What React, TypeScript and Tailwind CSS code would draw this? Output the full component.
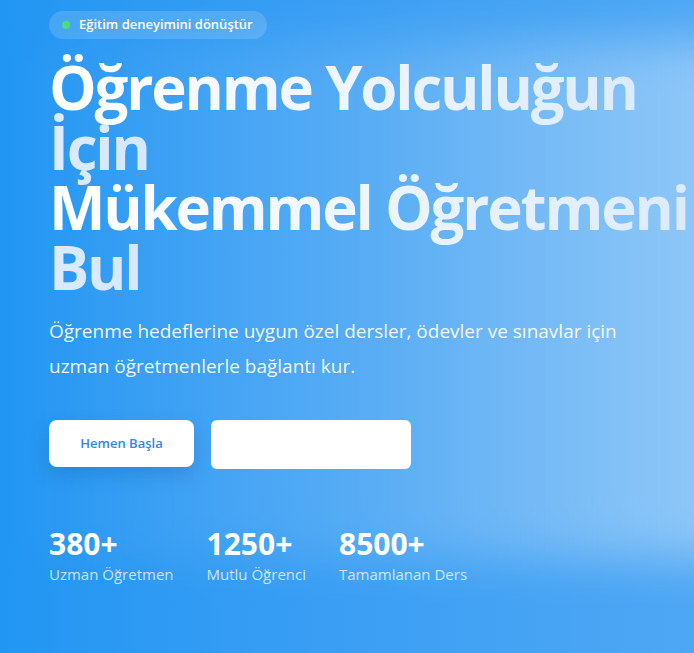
export default function App() {
  const stats = [
    { value: '380+', label: 'Uzman Öğretmen' },
    { value: '1250+', label: 'Mutlu Öğrenci' },
    { value: '8500+', label: 'Tamamlanan Ders' },
  ]

  return (
    <div
      className="relative h-[653px] w-full overflow-hidden bg-gradient-to-r from-[#2196f3] to-[#4ea7f4] text-white"
      style={{ fontFamily: '"Open Sans", "Noto Sans", sans-serif' }}
    >
      {/* light band on the right half */}
      <div className="pointer-events-none absolute -right-[60px] left-0 top-[40px] h-[520px] bg-gradient-to-r from-transparent via-white/15 to-white/40 blur-[24px]" />

      <div className="relative px-[49px] pt-[11px]">
        <div className="inline-flex h-[28px] items-center gap-[9px] rounded-full bg-white/15 pl-[13px] pr-[14px]">
          <span className="h-[8px] w-[8px] rounded-full bg-[#4ade80]" />
          <span className="text-[13px] font-semibold">Eğitim deneyimini dönüştür</span>
        </div>

        <h1 className="mt-[18px] w-[700px] text-[60px] font-bold leading-[60px] tracking-[-2.2px]">
          <span className="bg-gradient-to-r from-white to-[#d6e8fc] bg-clip-text text-transparent">
            Öğrenme Yolculuğun İçin
          </span>
          <br />
          <span className="bg-gradient-to-r from-white to-[#d6e8fc] bg-clip-text text-transparent">
            Mükemmel Öğretmeni Bul
          </span>
        </h1>

        <p className="mt-[17px] max-w-[590px] text-[19px] leading-[35px] text-white/95">
          Öğrenme hedeflerine uygun özel dersler, ödevler ve sınavlar için uzman öğretmenlerle bağlantı kur.
        </p>

        <div className="mt-[36px] flex items-start gap-[17px]">
          <button className="h-[47px] w-[145px] rounded-lg bg-white text-[13px] font-semibold text-[#2f86f0] shadow-[0_8px_18px_rgba(20,80,160,0.25)]">
            Hemen Başla
          </button>
          <button className="h-[49px] w-[200px] rounded-md bg-white text-[13px] font-semibold text-white">
            Öğretmen Ol
          </button>
        </div>

        <div className="mt-[57px] flex gap-[33px]">
          {stats.map(s => (
            <div key={s.label}>
              <div className="text-[30px] font-bold leading-[36px]">{s.value}</div>
              <div className="mt-[2px] text-[15px] leading-[20px] text-white/75">{s.label}</div>
            </div>
          ))}
        </div>
      </div>
    </div>
  )
}
